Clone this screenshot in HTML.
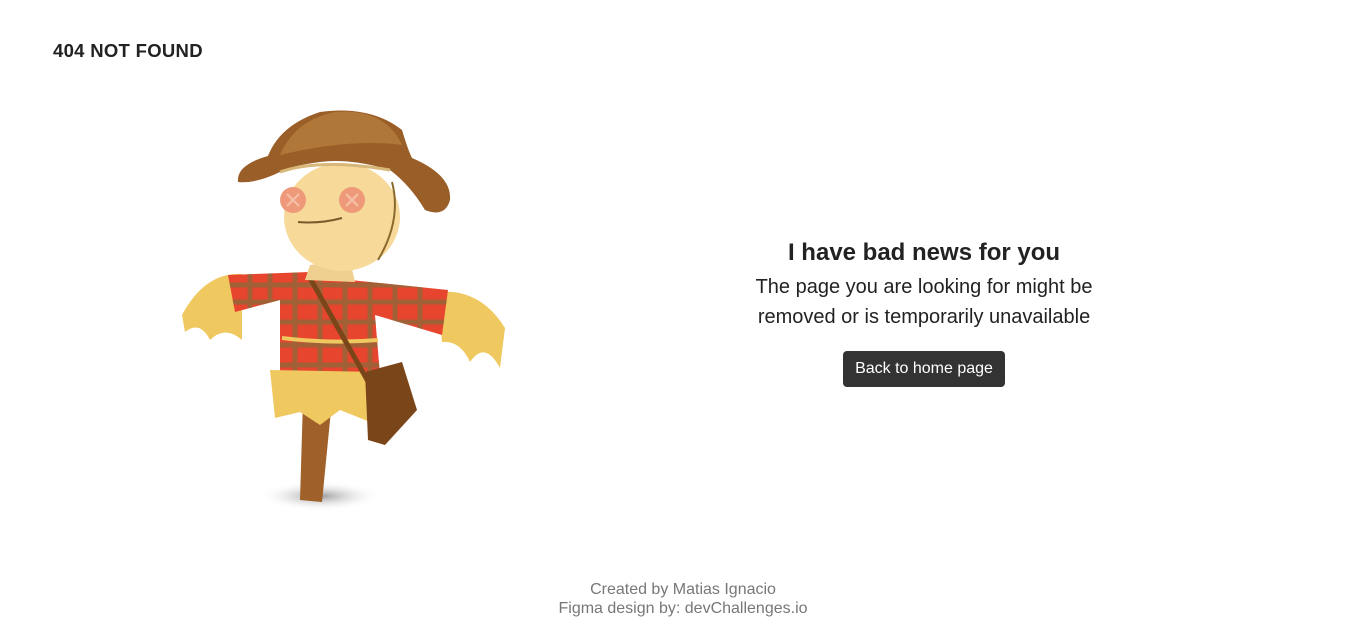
<!DOCTYPE html>
<html><head><meta charset="utf-8"><style>
body{margin:0;width:1366px;height:644px;background:#fff;font-family:"Liberation Sans",Arial,sans-serif;position:relative;overflow:hidden;color:#222}
.logo{position:absolute;left:53px;top:40px;font-weight:bold;font-size:18.5px;letter-spacing:0.3px;color:#222}
.box{position:absolute;left:724px;width:400px;top:237px;text-align:center}
h1{margin:0;font-size:24px;font-weight:bold;line-height:32px;color:#222}
p{margin:3px 0 0;font-size:20px;line-height:30px;color:#222}
.btn{display:inline-block;margin-top:19px;background:#333;color:#fff;font-size:16px;padding:0 12px;height:36px;line-height:36px;border-radius:4px;width:138px}
.foot{position:absolute;left:0;width:1366px;top:580px;text-align:center;color:#777;font-size:16px;line-height:19px}
svg{position:absolute;left:170px;top:100px}
</style></head><body>
<div class="logo">404 NOT FOUND</div>
<svg width="350" height="420" viewBox="0 0 350 420">
<defs><radialGradient id="sh"><stop offset="0" stop-color="#999"/><stop offset="1" stop-color="#fff" stop-opacity="0"/></radialGradient>
<clipPath id="shirt"><path d="M58 175 L140 172 L180 180 L278 190 L272 235 L205 215 L210 275 L110 275 L110 200 L65 212 Z"/></clipPath></defs>
<ellipse cx="150" cy="396" rx="62" ry="15" fill="url(#sh)"/>
<path d="M133 300 L162 300 L152 402 L130 400 Z" fill="#a0602a"/>
<path d="M12 215 Q35 172 72 174 L72 240 Q55 225 40 240 Q30 220 15 232 Z" fill="#f0c860"/>
<path d="M268 192 Q310 188 335 228 L330 268 Q315 240 300 262 Q290 240 272 242 Z" fill="#f0c860"/>
<g clip-path="url(#shirt)">
<rect x="50" y="160" width="240" height="120" fill="#e8452e"/>
<g stroke="#8a6a3a" stroke-width="5" opacity=".75">
<path d="M50 185 H290 M50 202 H290 M50 222 H290 M50 245 H290 M50 265 H290"/>
<path d="M80 160 V280 M100 160 V280 M125 160 V280 M150 160 V280 M175 160 V280 M200 160 V280 M225 160 V280 M250 160 V280"/>
</g></g>
<path d="M112 238 Q160 244 208 240" stroke="#f0c860" stroke-width="4" fill="none"/>
<path d="M100 270 L210 272 L200 322 L170 310 L150 325 L130 312 L105 318 Z" fill="#f0c860"/>
<path d="M140 178 L200 285" stroke="#7a4518" stroke-width="5"/>
<path d="M195 272 L232 262 L247 310 L215 345 L198 340 Z" fill="#7a4518"/>
<path d="M140 165 L180 160 L185 182 L135 180 Z" fill="#f0d090"/>
<ellipse cx="172" cy="117" rx="58" ry="54" fill="#f7d99a"/>
<path d="M68 82 Q66 65 98 56 Q110 25 150 12 Q200 5 232 30 Q238 50 242 58 Q282 75 280 100 Q275 118 255 110 Q240 85 220 70 Q180 58 150 62 Q120 66 110 72 Q85 84 68 82 Z" fill="#9a5e28"/>
<path d="M110 55 Q125 20 165 12 Q215 8 232 45 Q180 38 110 55 Z" fill="#b07838"/>
<path d="M110 72 Q150 58 220 70" stroke="#d8b878" stroke-width="3" fill="none"/>
<path d="M222 82 Q232 120 208 160" stroke="#8a6a2a" stroke-width="2" fill="none"/>
<circle cx="123" cy="100" r="13" fill="#ee9a7a"/>
<circle cx="182" cy="100" r="13" fill="#ee9a7a"/>
<path d="M117 94 L129 106 M129 94 L117 106 M176 94 L188 106 M188 94 L176 106" stroke="#f7c0a8" stroke-width="2"/>
<path d="M128 122 Q150 124 172 118" stroke="#7a5a2a" stroke-width="2" fill="none"/>
</svg>
<div class="box">
<h1>I have bad news for you</h1>
<p>The page you are looking for might be<br>removed or is temporarily unavailable</p>
<span class="btn">Back to home page</span>
</div>
<div class="foot">Created by Matias Ignacio<br>Figma design by: devChallenges.io</div>
</body></html>
